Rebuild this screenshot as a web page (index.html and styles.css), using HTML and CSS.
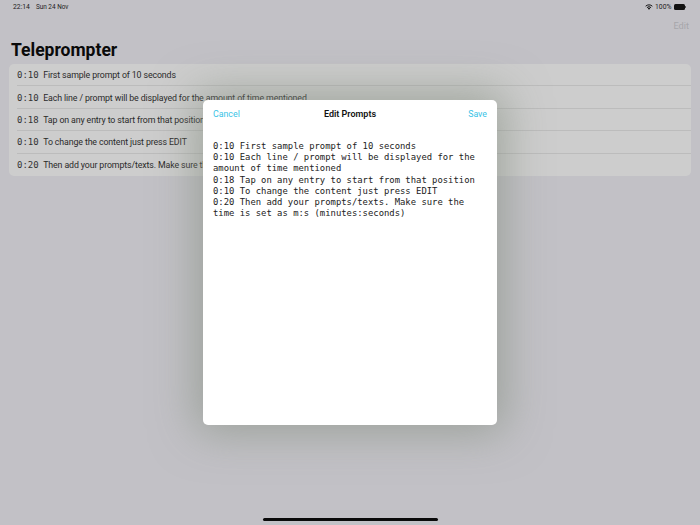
FILE: index.html
```html
<!DOCTYPE html>
<html lang="en">
  <head>
    <meta charset="UTF-8" />
    <title>Teleprompter</title>
    <link rel="stylesheet" href="styles.css">
  </head>
  <body>
    <div class="screen">
      <div class="status-bar">
        <div class="status-left">
          <span>22:14</span>
          <span class="status-date">Sun 24 Nov</span>
        </div>
        <div class="status-right">
          <svg class="wifi" width="8" height="6" viewBox="0 0 16 12">
            <path d="M8 11.5 5.6 8.9a3.4 3.4 0 0 1 4.8 0z" fill="#111"/>
            <path d="M3.9 7.2a6 6 0 0 1 8.2 0" fill="none" stroke="#111" stroke-width="2"/>
            <path d="M1.3 4.4a9.7 9.7 0 0 1 13.4 0" fill="none" stroke="#111" stroke-width="2"/>
          </svg>
          <span>100%</span>
          <div class="battery"><div class="battery-fill"></div><div class="battery-nub"></div></div>
        </div>
      </div>

      <div class="nav-bar">
        <span class="edit-btn">Edit</span>
      </div>

      <h1 class="title">Teleprompter</h1>

      <div class="prompt-list">
        <div class="prompt-row"><span class="time">0:10</span><span class="prompt-text">First sample prompt of 10 seconds</span></div>
        <div class="prompt-row"><span class="time">0:10</span><span class="prompt-text">Each line / prompt will be displayed for the amount of time mentioned</span></div>
        <div class="prompt-row"><span class="time">0:18</span><span class="prompt-text">Tap on any entry to start from that position</span></div>
        <div class="prompt-row"><span class="time">0:10</span><span class="prompt-text">To change the content just press EDIT</span></div>
        <div class="prompt-row"><span class="time">0:20</span><span class="prompt-text">Then add your prompts/texts. Make sure the time is set as m:s (minutes:seconds)</span></div>
      </div>

      <div class="modal">
        <div class="modal-head">
          <span class="modal-btn">Cancel</span>
          <span class="modal-title">Edit Prompts</span>
          <span class="modal-btn modal-btn-right">Save</span>
        </div>
        <div class="modal-body">0:10 First sample prompt of 10 seconds
0:10 Each line / prompt will be displayed for the amount of time mentioned
0:18 Tap on any entry to start from that position
0:10 To change the content just press EDIT
0:20 Then add your prompts/texts. Make sure the time is set as m:s (minutes:seconds)</div>
      </div>

      <div class="home-bar"></div>
    </div>
  </body>
</html>
```

FILE: styles.css
```css
html {
  overflow: hidden;
}

body {
  margin: 0;
  font-family: Roboto, "Liberation Sans", sans-serif;
  color: #111;
}

.screen {
  position: relative;
  width: 700px;
  height: 525px;
  background-color: #c2c1c6;
  overflow: hidden;
}

.status-bar {
  display: flex;
  justify-content: space-between;
  align-items: center;
  height: 13px;
  padding: 0 14px 0 13px;
  font-size: 6.8px;
  color: #222;
}

.status-left {
  display: flex;
  gap: 6px;
}

.status-date {
  font-size: 6.4px;
}

.status-right {
  display: flex;
  align-items: center;
  gap: 2px;
}

.battery {
  display: flex;
  align-items: center;
  gap: 0.5px;
}

.battery-fill {
  width: 11px;
  height: 6px;
  border-radius: 1.5px;
  background: #111;
}

.battery-nub {
  width: 1px;
  height: 2px;
  background: #555;
}

.nav-bar {
  display: flex;
  justify-content: flex-end;
  height: 24px;
  padding: 7px 11px 0 0;
  box-sizing: border-box;
}

.edit-btn {
  font-size: 9.2px;
  color: #a6a6aa;
}

.title {
  margin: 0 0 0 11px;
  height: 27px;
  font-size: 17.5px;
  line-height: 26px;
  font-weight: 700;
  color: #0a0a0a;
}

.prompt-list {
  margin: 0 9px;
  padding-left: 8px;
  background: #cdcdcd;
  border-radius: 5px;
}

.prompt-row {
  display: flex;
  align-items: center;
  gap: 4.5px;
  height: 22.4px;
  padding-top: 1px;
  box-sizing: border-box;
  border-bottom: 1px solid #bcbcbc;
  font-size: 8.8px;
  letter-spacing: -0.12px;
  white-space: nowrap;
  overflow: hidden;
  color: #2a2a2a;
}

.prompt-row:last-child {
  border-bottom: none;
}

.time {
  font-family: "DejaVu Sans Mono", monospace;
  font-size: 9px;
  letter-spacing: 0;
  color: #333;
}

.modal {
  position: absolute;
  top: 100px;
  left: 203px;
  width: 294px;
  height: 325px;
  background: white;
  border-radius: 5px;
  box-shadow: 0 0 44px 8px rgba(130, 140, 125, 0.6);
}

.modal-head {
  display: grid;
  grid-template-columns: 1fr auto 1fr;
  align-items: center;
  height: 28px;
  padding: 0 10px;
}

.modal-btn {
  font-size: 8.8px;
  color: #38c3e6;
}

.modal-btn-right {
  text-align: right;
}

.modal-title {
  font-size: 9px;
  font-weight: 600;
  color: #111;
}

.modal-body {
  padding: 13px 10px 0;
  font-family: "DejaVu Sans Mono", monospace;
  font-size: 8.9px;
  line-height: 11.2px;
  white-space: pre-wrap;
  color: #222;
}

.home-bar {
  position: absolute;
  left: 263px;
  bottom: 4px;
  width: 175px;
  height: 3px;
  border-radius: 2px;
  background: #0a0a0a;
}
```
